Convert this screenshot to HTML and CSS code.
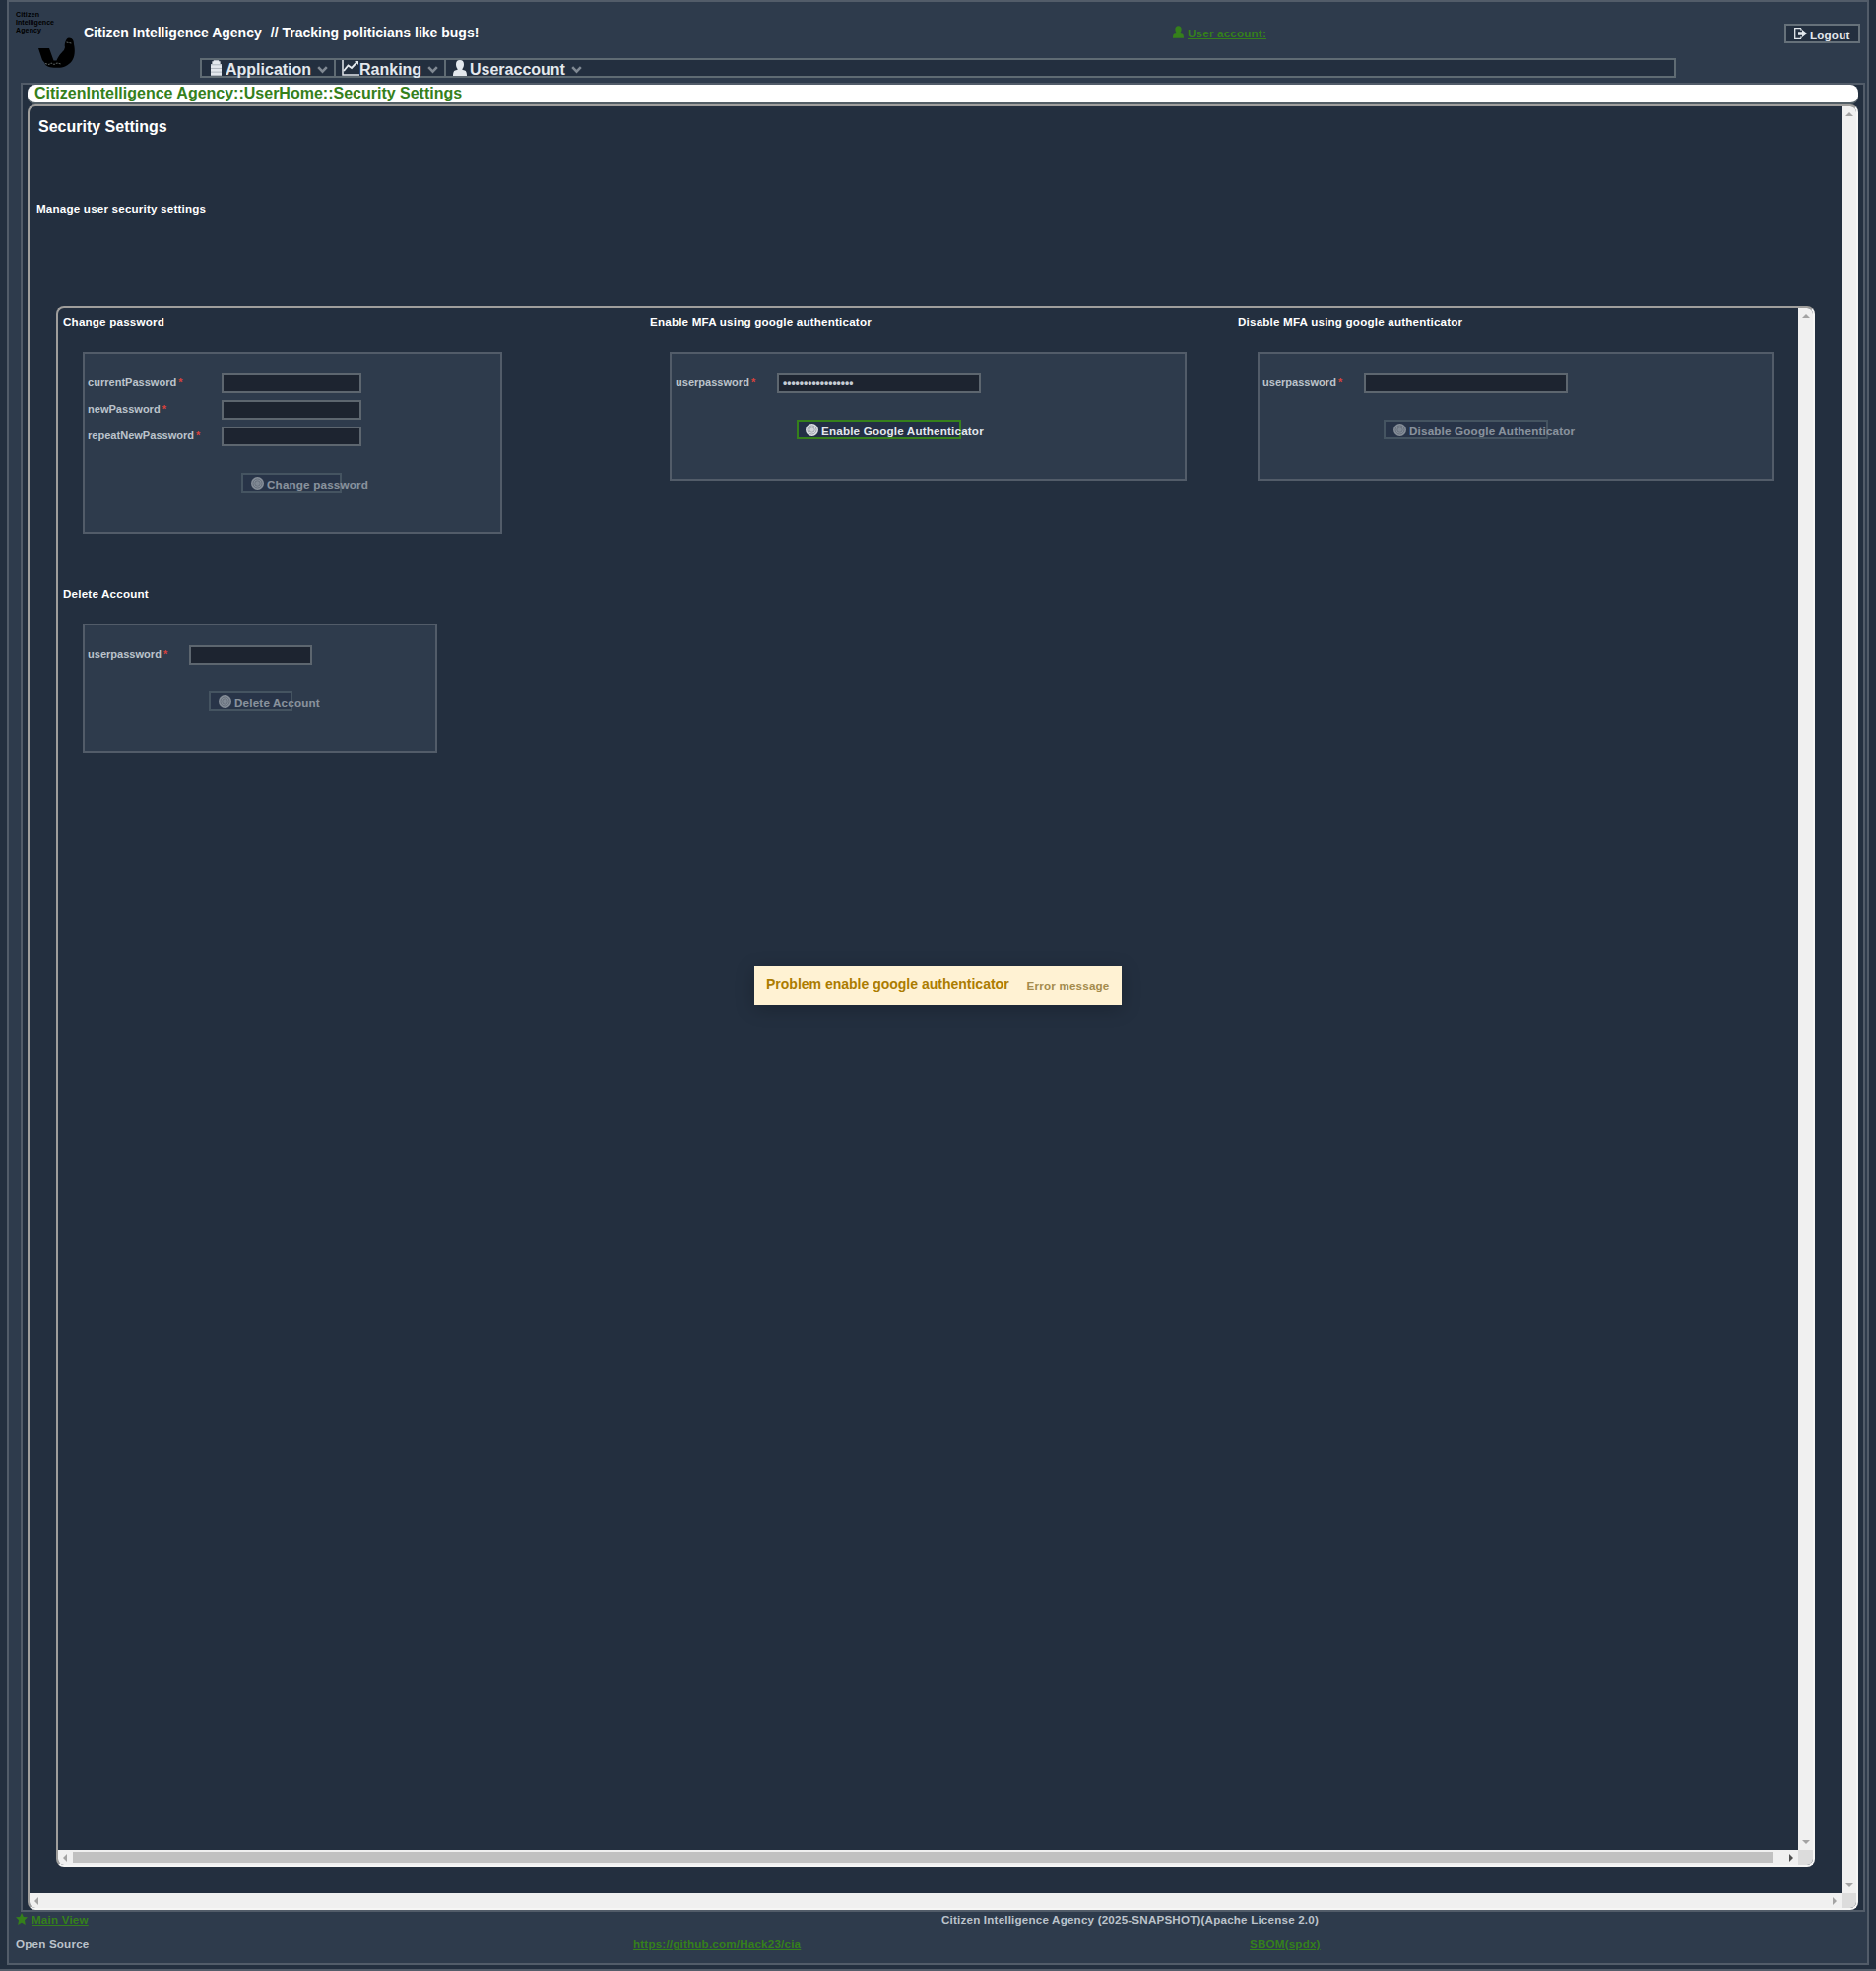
FILE: index.html
```html
<!DOCTYPE html>
<html lang="en">
<head>
<meta charset="utf-8">
<title>Security Settings</title>
<link rel="stylesheet" href="styles.css">
</head>
<body>
<svg class="defs" width="0" height="0">
  <symbol id="user" viewBox="0 0 14 16"><path d="M7 0C4.300 0 3 1.600 3 4.200c0 2.300.8 4.200 1.900 5C4.600 10.200 2 10 1.200 11 .3 12 0 14 0 16h14c0-2-.3-4-1.200-5-.8-1-3.400-.8-3.700-1.800 1.100-.8 1.900-2.700 1.900-5C11 1.600 9.700 0 7 0z" fill="currentColor"/></symbol>
  <symbol id="chev" viewBox="0 0 11 8"><path d="M1.200 1.200l4.300 4.500 4.300-4.500" fill="none" stroke="currentColor" stroke-width="2.500"/></symbol>
  <symbol id="disc" viewBox="0 0 13 13"><circle cx="6.500" cy="6.500" r="6.500" fill="#dcdfe3"/><circle cx="6.500" cy="6.500" r="4.500" fill="none" stroke="#8d949e" stroke-width=".8"/><circle cx="6.500" cy="6.500" r="2.700" fill="#d0d4d9" stroke="#8d949e" stroke-width=".7"/></symbol>
</svg>
<div class="page">
  <header class="header">
    <svg class="logo" viewBox="0 0 68 64">
      <g font-family="Liberation Sans" font-size="7" font-weight="bold"><text x="3" y="9.700" textLength="24">Citizen</text><text x="3" y="18" textLength="39">Intelligence</text><text x="3" y="26.300" textLength="26">Agency</text></g>
      <path d="M26 42h11l4.500 12.500h3C47 49 49 47 52 44l1-3c-1-3 1-9.500 4-9.500 4 0 5 3 5 6.500C63.500 44 63 51 60 55c-4 5-9 7-15 6.800-6 .2-12-1-12.500-4.800L30 54z"/>
      <path d="M33 57.500l4 1 2-1.500 3 1.500 3-1.500 4 1M54.500 36l5 1" stroke="#87908f" stroke-width=".7" stroke-dasharray="2 1" fill="none"/>
    </svg>
    <div class="title"><span>Citizen Intelligence Agency</span><span>// Tracking politicians like bugs!</span></div>
    <a class="account"><svg width="11" height="13"><use href="#user"/></svg><u>User account:</u></a>
    <div class="logout"><svg width="13" height="12" viewBox="0 0 13 12"><path d="M7 .7H.7v10.600H7M7 .7v2M7 11.300v-2" fill="none" stroke="#e3e8ed" stroke-width="1.300"/><path d="M4 4.300h4V2l5 4-5 4V7.700H4z" fill="#e3e8ed"/></svg>Logout</div>
  </header>
  <nav class="menu">
    <div class="item app"><svg class="ic" width="11" height="16" viewBox="0 0 12 17"><path d="M3 0h6v1h1.500v3H12v13H0V4h1.500V1H3z" fill="currentColor"/><path d="M0 5h12M0 9h12M0 13h12" stroke="#a3abb4" stroke-width=".9"/></svg><span>Application</span><svg class="chev" width="11" height="8"><use href="#chev"/></svg></div>
    <div class="item rank"><svg class="ic" width="18" height="16" viewBox="0 0 18 16"><path d="M1 0v15h17" fill="none" stroke="currentColor" stroke-width="1.500"/><path d="M2 11l4.500-5.500L10 8l6-6.500" fill="none" stroke="currentColor" stroke-width="1.900"/><path d="M13 1h4v4z" fill="currentColor"/></svg><span>Ranking</span><svg class="chev" width="11" height="8"><use href="#chev"/></svg></div>
    <div class="item acct"><svg class="ic" width="14" height="16"><use href="#user"/></svg><span>Useraccount</span><svg class="chev" width="11" height="8"><use href="#chev"/></svg></div>
  </nav>
  <main class="main">
    <div class="crumb">CitizenIntelligence Agency::UserHome::Security Settings</div>
    <div class="scroll outer">
      <div class="view">
        <h1>Security Settings</h1>
        <p class="lead">Manage user security settings</p>
        <div class="scroll inner">
          <div class="view grid">
            <section>
              <h2>Change password</h2>
              <div class="card pw">
                <div class="row"><label>currentPassword<i>*</i></label><div class="input"></div></div>
                <div class="row"><label>newPassword<i>*</i></label><div class="input"></div></div>
                <div class="row"><label>repeatNewPassword<i>*</i></label><div class="input"></div></div>
                <div class="btn off"><svg width="13" height="13"><use href="#disc"/></svg>Change password</div>
              </div>
            </section>
            <section>
              <h2>Enable MFA using google authenticator</h2>
              <div class="card mfa enable">
                <div class="row"><label>userpassword<i>*</i></label><div class="input"><span class="dots">•••••••••••••••••</span></div></div>
                <div class="btn focus"><svg width="13" height="13"><use href="#disc"/></svg>Enable Google Authenticator</div>
              </div>
            </section>
            <section>
              <h2>Disable MFA using google authenticator</h2>
              <div class="card mfa disable">
                <div class="row"><label>userpassword<i>*</i></label><div class="input"></div></div>
                <div class="btn off"><svg width="13" height="13"><use href="#disc"/></svg>Disable Google Authenticator</div>
              </div>
            </section>
            <section>
              <h2>Delete Account</h2>
              <div class="card del">
                <div class="row"><label>userpassword<i>*</i></label><div class="input"></div></div>
                <div class="btn off"><svg width="13" height="13"><use href="#disc"/></svg>Delete Account</div>
              </div>
            </section>
          </div>
          <div class="vbar"><b class="up"></b><b class="down"></b></div>
          <div class="hbar"><b class="left"></b><div class="thumb"></div><b class="right dark"></b></div>
          <div class="corner"></div>
        </div>
      </div>
      <div class="vbar"><b class="up"></b><b class="down"></b></div>
      <div class="hbar"><b class="left"></b><b class="right"></b></div>
      <div class="corner"></div>
    </div>
  </main>
  <footer class="footer">
    <a class="home"><svg width="12" height="12" viewBox="0 0 12 12"><path d="M6 0l1.900 3.900 4.100.4-3 3L9.800 12 6 9.700 2.200 12l.8-4.700-3-3 4.100-.4z" fill="currentColor"/></svg><u>Main View</u></a>
    <span class="version">Citizen Intelligence Agency (2025-SNAPSHOT)(Apache License 2.0)</span>
    <span class="os">Open Source</span>
    <a class="git"><u>https://github.com/Hack23/cia</u></a>
    <a class="sbom"><u>SBOM(spdx)</u></a>
  </footer>
</div>
<div class="nextline"></div>
<div class="toast"><strong>Problem enable google authenticator</strong><span>Error message</span></div>
</body>
</html>
```
FILE: styles.css
```css
* { box-sizing: border-box; }
body { margin: 0; height: 2001px; overflow: hidden; background: #232f3f; color: #fff; font: bold 11.64px/14px "Liberation Sans", Arial, sans-serif; letter-spacing: .19px; display: flex; flex-direction: column; justify-content: space-between; }
.title, .menu, .crumb, h1, label, .toast strong, .logo, .dots { letter-spacing: 0; }
.defs { position: absolute; }
svg { display: block; flex: none; }
h1, h2, p { margin: 0; }
.page { margin: 0 7px; height: 1995px; border: 2px solid #525c69; background: #2e3b4c; display: flex; flex-direction: column; }
.nextline { height: 2px; background: #525c69; }
a { color: #35801b; display: flex; }

.header { height: 57px; display: flex; align-items: flex-start; flex: none; }
.logo { width: 68px; height: 64px; margin: 5px 0 0 4px; overflow: visible; }
.title { font-size: 14px; line-height: 16px; margin: 23px 0 0 4px; width: 1106px; display: flex; gap: 9px; white-space: nowrap; }
.account { margin-top: 24px; gap: 4px; width: 621px; }
.account u { margin-top: 1px; }
.logout { width: 77px; height: 20px; margin-top: 22px; border: 2px solid #66717a; background: #232f3f; color: #e3e8ed; display: flex; gap: 3px; padding: 3px 0 0 8px; }
.logout svg { margin-top: -1px; }

.menu { width: 1499px; height: 20px; margin-left: 194px; border: 2px solid #5f6b73; background: #232f3f; color: #e3e8ed; display: flex; font-size: 16px; line-height: 18px; flex: none; }
.item { display: flex; height: 16px; padding-left: 8px; border-right: 2px solid #5f6b73; }
.item span { margin-top: 1px; }
.item .chev { margin: 6px 0 0 6px; color: #808993; }
.app { width: 136px; padding-left: 9px; }
.app span { margin-left: 4px; }
.rank { width: 112px; padding-left: 6px; }
.rank span { margin-left: 0; }
.acct { border: 0; padding-left: 7px; }
.acct span { margin-left: 3px; }

.main { margin: 5px 2px 0 12px; height: 1857px; border: 2px solid #525c69; background: #232f3f; padding: 0 5px; display: flex; flex-direction: column; flex: none; }
.crumb { height: 20px; flex: none; background: #fff; border-bottom: 2px solid #535f66; border-radius: 8px; padding-left: 7px; color: #35801b; font-size: 16px; line-height: 17px; }
.scroll { border: 2px solid #9f9e9c; border-right-color: #f6f6f5; border-bottom-color: #f6f6f5; border-radius: 8px; overflow: hidden; display: grid; grid-template: 1fr 15px / 1fr 15px; }
.outer { height: 1833px; }
.view { padding: 12px 27px 27px; overflow: hidden; }
h1 { font-size: 16px; line-height: 18px; margin-left: -18px; }
.lead { margin: 68px 0 93px -20px; line-height: 12px; }
.inner { height: 1584px; width: 1786px; }
.vbar, .hbar { background: #f0f0f0; display: flex; justify-content: space-between; align-items: center; }
.vbar { flex-direction: column; padding: 6px 0; }
.hbar { padding: 0 5px; }
.corner { background: #dcdcdc; }
.thumb { height: 11px; flex: 1; background: #c1c1c1; margin: 0 17px 0 6px; }
b { width: 0; height: 0; border: 0 solid transparent; }
.up { border-width: 0 4px 4px; border-bottom-color: #a3a3a3; }
.down { border-width: 4px 4px 0; border-top-color: #a3a3a3; }
.left { border-width: 4px 4px 4px 0; border-right-color: #a3a3a3; }
.right { border-width: 4px 0 4px 4px; border-left-color: #a3a3a3; }
.right.dark { border-left-color: #505050; }

.grid { padding: 7px 5px; display: grid; grid-template-columns: 596px 597px 1fr; grid-template-rows: 276px 1fr; }
h2 { font-size: inherit; line-height: 14px; height: 37px; }
.card { margin-left: 20px; border: 2px solid #525c69; background: #2e3b4c; padding: 20px 3px; }
.pw { width: 426px; height: 185px; --in: 142px; --lab: 136px; --btn: 102px; }
.mfa { width: 525px; height: 131px; --in: 207px; --lab: 104px; --btn: 167px; }
.enable { padding-left: 4px; --lab: 103px; }
.disable { width: 524px; --lab: 103px; }
.del { width: 360px; height: 131px; --in: 125px; --lab: 103px; --btn: 85px; }
.row { display: flex; height: 27px; }
label { width: var(--lab); flex: none; font-size: 11.05px; line-height: 18px; color: #bcc3cb; white-space: nowrap; }
label i { color: #d8423c; font-style: normal; margin-left: 2px; }
.input { width: var(--in); height: 20px; border: 2px solid #5d666f; background: #1d2430; padding-left: 4px; }
.dots { display: block; font-size: 12px; line-height: 16px; color: #c5ccd4; }
.btn { width: var(--btn); height: 20px; margin: 20px 0 0 calc(var(--lab) + 20px); border: 2px solid #5d6d76; background: #232f45; display: flex; gap: 3px; padding: 2px 0 0 8px; white-space: nowrap; color: #e3e8ed; line-height: 16px; }
.off { opacity: .5; }
.focus { border-color: #35801b; padding-left: 7px; }

.footer { display: grid; grid-template-columns: 627px 312px 314px 1fr; grid-template-rows: 25px 20px; padding: 1px 0 0 7px; color: #bcc3cb; }
.home { gap: 4px; grid-column: 1 / 3; }
.version { grid-column: 3 / 5; margin-left: 1px; }
.sbom { grid-column: 4; }

.toast { position: absolute; left: 766px; top: 981px; width: 373px; height: 39px; background: #fff2d3; color: #ac7c00; box-shadow: 0 4px 20px rgba(0, 0, 0, .22); display: flex; gap: 18px; padding: 10px 0 0 12px; white-space: nowrap; }
.toast strong { font-size: 14px; line-height: 16px; }
.toast span { margin-top: 3px; color: #a48b4c; }
```
